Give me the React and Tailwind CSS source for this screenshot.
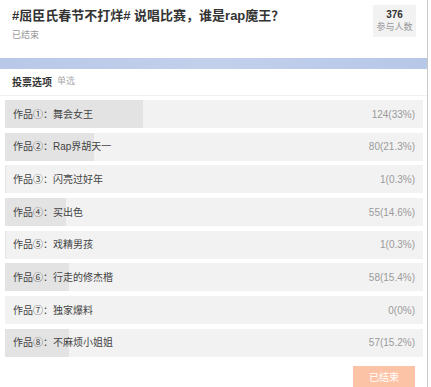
import React from "react";

const options = [
  { label: "作品①：舞会女王", value: "124(33%)", pct: 33 },
  { label: "作品②：Rap界胡天一", value: "80(21.3%)", pct: 21.3 },
  { label: "作品③：闪亮过好年", value: "1(0.3%)", pct: 0.3 },
  { label: "作品④：买出色", value: "55(14.6%)", pct: 14.6 },
  { label: "作品⑤：戏精男孩", value: "1(0.3%)", pct: 0.3 },
  { label: "作品⑥：行走的修杰楷", value: "58(15.4%)", pct: 15.4 },
  { label: "作品⑦：独家爆料", value: "0(0%)", pct: 0 },
  { label: "作品⑧：不麻烦小姐姐", value: "57(15.2%)", pct: 15.2 },
];

export default function App() {
  return (
    <div className="w-[431px] h-[387px] bg-white overflow-hidden font-['Liberation_Sans','Noto_Sans_CJK_SC',sans-serif]">
      <div className="w-[428px] h-[387px] border-r border-[#c9c9c9]">
        <div className="h-[58px] flex justify-between pl-[12px] pr-[11px]">
          <div className="pt-[9px]">
            <div className="text-[13px] leading-[14px] font-bold text-[#333]">
              #屈臣氏春节不打烊# 说唱比赛，谁是rap魔王？
            </div>
            <div className="mt-[6px] text-[9px] leading-[12px] text-[#999]">已结束</div>
          </div>
          <div className="mt-[5px] w-[43px] h-[32px] bg-[#f2f2f2] flex flex-col items-center justify-center">
            <div className="text-[10px] leading-[12px] font-bold text-[#333]">376</div>
            <div className="text-[9px] leading-[12px] text-[#999]">参与人数</div>
          </div>
        </div>
        <div className="h-[11px] bg-gradient-to-r from-[#b9c8e8] via-[#c2d0ec] to-[#b7c7e8]" />
        <div className="h-[27px] flex items-center gap-[5px] px-[12px] border-b border-[#f0f0f0]">
          <span className="text-[10px] font-bold text-[#333]">投票选项</span>
          <span className="text-[9px] text-[#aaa]">单选</span>
        </div>
        <div className="pt-[4px] pl-[5px] flex flex-col gap-[4.7px]">
          {options.map((o) => (
            <div key={o.label} className="relative w-[418px] h-[28px] bg-[#f2f2f2] flex items-center justify-between pl-[8px] pr-[8px]">
              <div className="absolute left-0 top-0 h-full bg-[#e3e3e3]" style={{ width: `${o.pct}%` }} />
              <span className="relative text-[10px] text-[#444]">{o.label}</span>
              <span className="relative text-[10px] text-[#9a9a9a]">{o.value}</span>
            </div>
          ))}
        </div>
        <div className="flex justify-end pr-[12px] mt-[9px]">
          <div className="w-[62px] h-[24px] bg-[#fcc3a6] text-white text-[10px] flex items-center justify-center">已结束</div>
        </div>
      </div>
    </div>
  );
}
